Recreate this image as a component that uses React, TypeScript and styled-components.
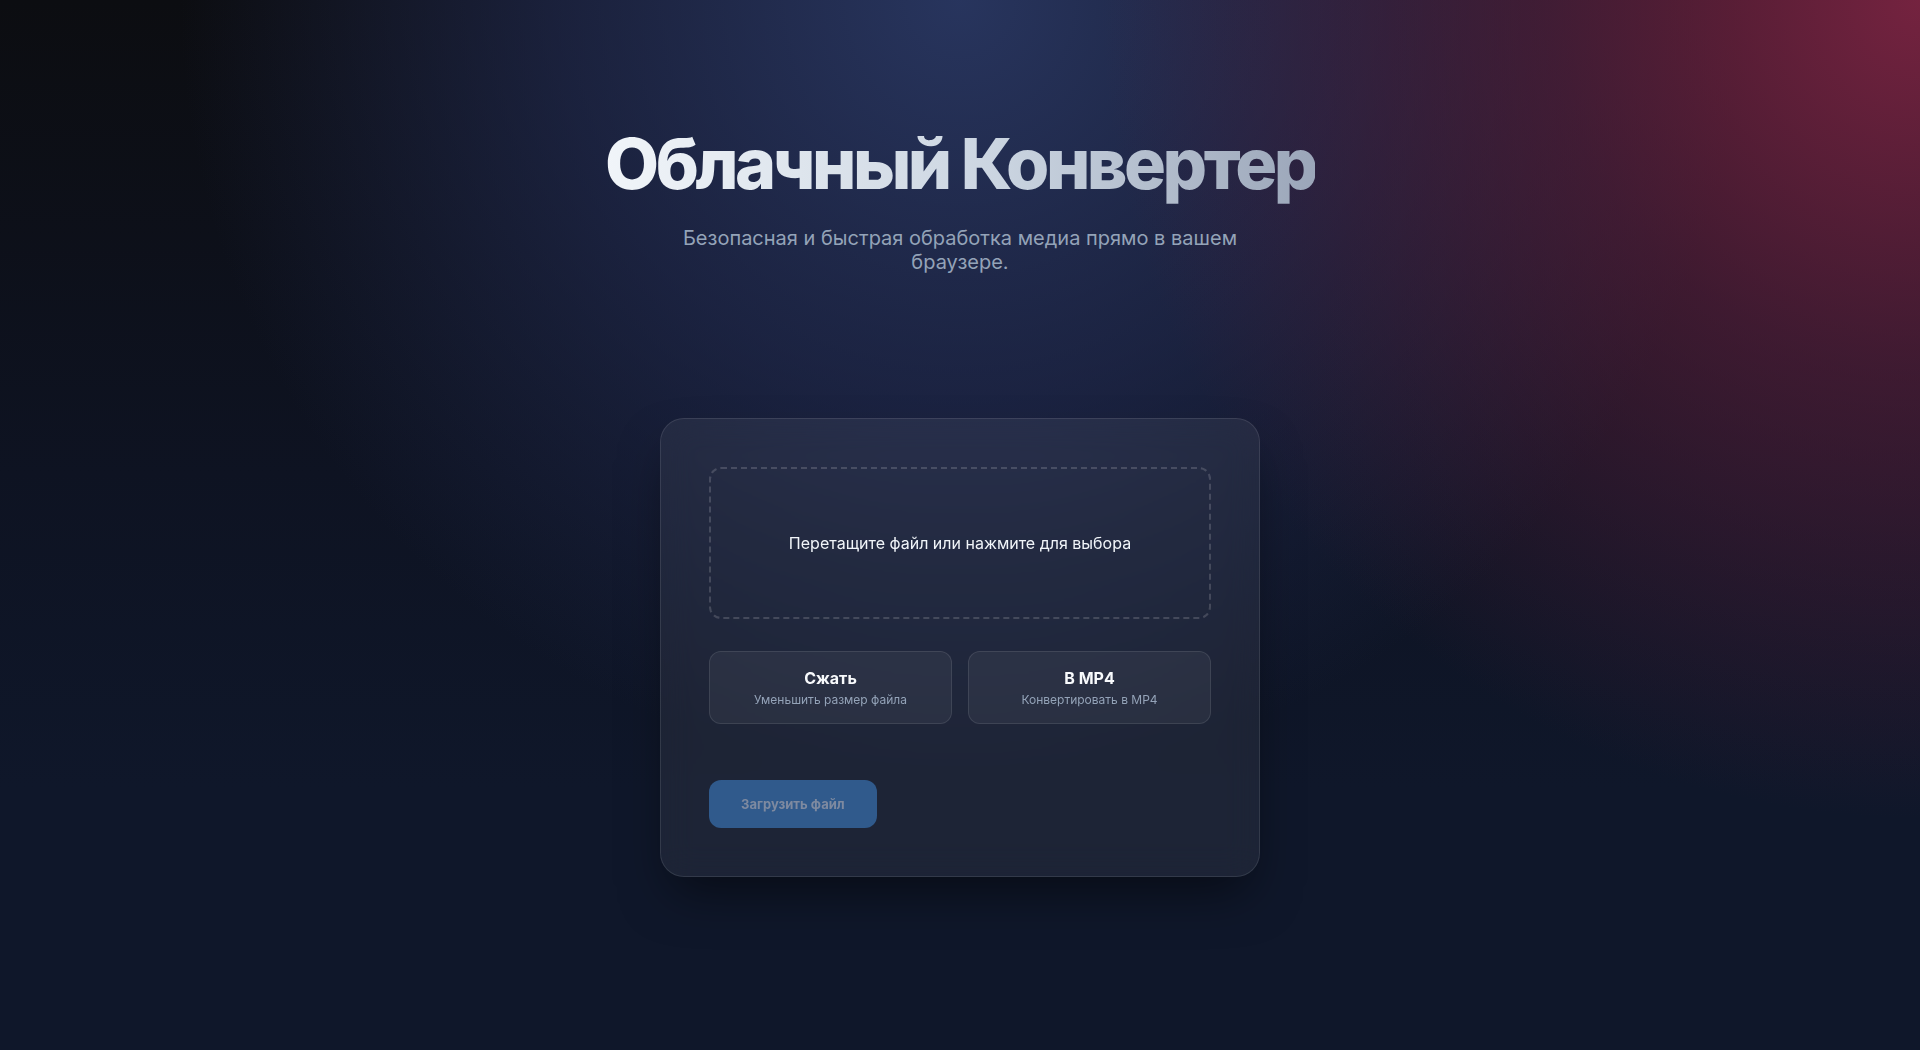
import React from "react";
import styled, { createGlobalStyle } from "styled-components";

const GlobalStyle = createGlobalStyle`
  * {
    box-sizing: border-box;
  }
  html, body {
    margin: 0;
    padding: 0;
  }
  body {
    font-family: Inter, "Noto Sans", "Liberation Sans", sans-serif;
    color: #f1f5f9;
    background: #0f172a;
  }
`;

const Page = styled.main`
  min-height: 100vh;
  display: flex;
  flex-direction: column;
  align-items: center;
  padding: 122px 24px 80px;
  background:
    radial-gradient(ellipse 1050px 1050px at 100% 0%, rgba(122, 36, 66, 0.95) 0%, rgba(95, 32, 62, 0.6) 35%, rgba(15, 23, 42, 0) 78%),
    radial-gradient(ellipse 1000px 1000px at 50% 0%, rgba(42, 56, 100, 0.92) 0%, rgba(36, 46, 88, 0.6) 40%, rgba(15, 23, 42, 0) 78%),
    linear-gradient(180deg, #0c0d11 0%, #0e1322 45%, #0f172a 75%);
`;

const Header = styled.header`
  display: flex;
  flex-direction: column;
  align-items: center;
  text-align: center;
`;

const Title = styled.h1`
  display: inline-block;
  margin: 0;
  font-size: 70px;
  line-height: 1.2;
  font-weight: 800;
  letter-spacing: -0.05em;
  background: linear-gradient(90deg, #f1f5f9 0%, #cbd5e1 55%, #9ba6b9 100%);
  -webkit-background-clip: text;
  background-clip: text;
  color: transparent;
`;

const Subtitle = styled.p`
  margin: 20px 0 0;
  max-width: 600px;
  font-size: 20px;
  line-height: 24px;
  color: #94a3b8;
`;

const Card = styled.section`
  width: 600px;
  margin-top: 144px;
  padding: 48px;
  border-radius: 24px;
  border: 1px solid rgba(255, 255, 255, 0.1);
  background: rgba(255, 255, 255, 0.058);
  backdrop-filter: blur(16px);
  box-shadow: 0 25px 50px -12px rgba(0, 0, 0, 0.5);
  display: flex;
  flex-direction: column;
`;

const DropZone = styled.label`
  height: 152px;
  border: 2px dashed rgba(255, 255, 255, 0.16);
  border-radius: 12px;
  display: flex;
  align-items: center;
  justify-content: center;
  font-size: 16px;
  color: #f1f5f9;
  cursor: pointer;
`;

const Options = styled.div`
  display: grid;
  grid-template-columns: 1fr 1fr;
  gap: 16px;
  margin-top: 32px;
`;

const Option = styled.button`
  height: 73px;
  padding: 16px 12px 15px;
  border-radius: 12px;
  border: 1px solid rgba(255, 255, 255, 0.1);
  background: rgba(255, 255, 255, 0.05);
  display: flex;
  flex-direction: column;
  align-items: center;
  font-family: inherit;
  cursor: pointer;
`;

const OptionTitle = styled.span`
  font-size: 16px;
  line-height: 20px;
  font-weight: 700;
  color: #f8fafc;
`;

const OptionHint = styled.span`
  margin-top: 4px;
  font-size: 12px;
  line-height: 16px;
  color: #94a3b8;
`;

const Actions = styled.div`
  display: flex;
  margin-top: 56px;
`;

const UploadButton = styled.button`
  height: 48px;
  padding: 0 32px;
  border: none;
  border-radius: 12px;
  background: #305a8c;
  color: #7e8aa0;
  font-family: inherit;
  font-size: 13px;
  font-weight: 700;
  cursor: not-allowed;
`;

const options = [
  { title: "Сжать", hint: "Уменьшить размер файла" },
  { title: "В MP4", hint: "Конвертировать в MP4" },
];

export default function App() {
  return (
    <>
      <GlobalStyle />
      <Page>
        <Header>
          <Title>Облачный Конвертер</Title>
          <Subtitle>Безопасная и быстрая обработка медиа прямо в вашем браузере.</Subtitle>
        </Header>
        <Card>
          <DropZone>Перетащите файл или нажмите для выбора</DropZone>
          <Options>
            {options.map((o) => (
              <Option key={o.title}>
                <OptionTitle>{o.title}</OptionTitle>
                <OptionHint>{o.hint}</OptionHint>
              </Option>
            ))}
          </Options>
          <Actions>
            <UploadButton disabled>Загрузить файл</UploadButton>
          </Actions>
        </Card>
      </Page>
    </>
  );
}
